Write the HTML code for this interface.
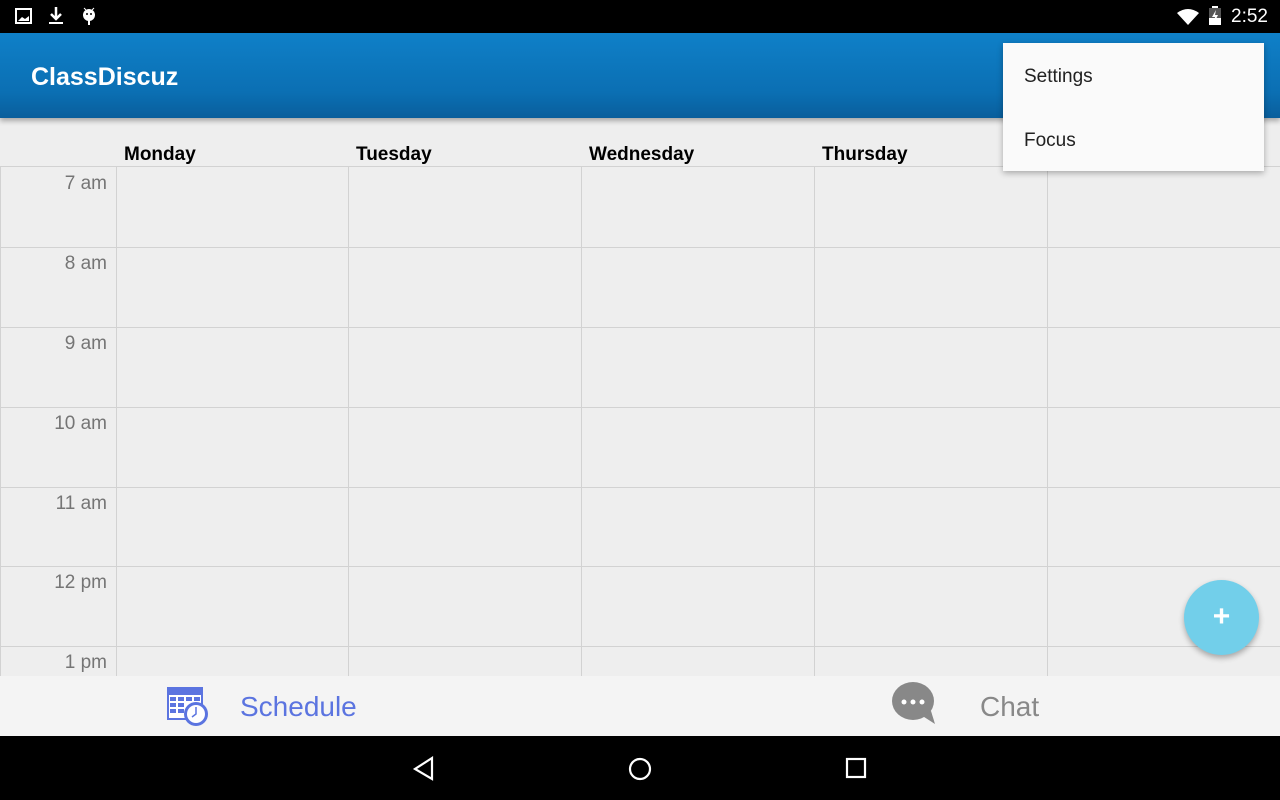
<!DOCTYPE html>
<html><head><style>
*{margin:0;padding:0;box-sizing:border-box}
body{width:1280px;height:800px;overflow:hidden;background:#eee;font-family:"Liberation Sans",sans-serif;position:relative}
.abs{position:absolute}
.sb{left:0;top:0;width:1280px;height:33px;background:#000;color:#fff}
.ab{left:0;top:33px;width:1280px;height:85px;background:linear-gradient(#0f80c8,#0b6fb3 70%,#095e9c);box-shadow:0 3px 5px rgba(0,0,0,.3)}
.day{top:144px;font-weight:bold;font-size:19px;color:#000}
.vl{top:166px;width:1px;height:510px;background:#d2d2d2}
.hl{left:0;width:1280px;height:1px;background:#d2d2d2}
.t{left:0;width:107px;text-align:right;font-size:19px;color:#757575}
</style></head><body>
<div class="abs sb">
<svg class="abs" style="left:15px;top:8px" width="18" height="17"><rect x="1" y="1" width="15" height="14" fill="none" stroke="#fff" stroke-width="2"/><path d="M3 13 L7 9 L10 11 L14 8 V13Z" fill="#fff"/></svg>
<svg class="abs" style="left:47px;top:6px" width="18" height="20"><path d="M9 1V12M4 8L9 13 14 8" stroke="#fff" stroke-width="2.5" fill="none"/><rect x="2" y="16" width="14" height="2" fill="#fff"/></svg>
<svg class="abs" style="left:81px;top:6px" width="16" height="20"><circle cx="8" cy="9" r="6" fill="#fff"/><rect x="7" y="13" width="2" height="6" fill="#fff"/><circle cx="6" cy="8" r="1" fill="#000"/><circle cx="10" cy="8" r="1" fill="#000"/><path d="M3 2L5 4M13 2L11 4" stroke="#fff"/></svg>
<svg class="abs" style="left:1176px;top:8px" width="24" height="18"><path d="M1 5 Q12 -3 23 5 L12 17Z" fill="#fff"/></svg>
<svg class="abs" style="left:1208px;top:6px" width="14" height="20"><rect x="4" y="0" width="6" height="2" fill="#fff"/><rect x="1" y="2" width="12" height="17" fill="#555"/><rect x="1" y="12" width="12" height="7" fill="#fff"/><path d="M8 4L4 11H7L6 17L10 9H7Z" fill="#fff"/></svg>
<div class="abs" style="left:1231px;top:6px;font-size:19px">2:52</div>
</div>
<div class="abs ab"><div class="abs" style="left:31px;top:30px;color:#fff;font-size:25px;font-weight:bold">ClassDiscuz</div></div>
<div class="abs day" style="left:124px">Monday</div>
<div class="abs day" style="left:356px">Tuesday</div>
<div class="abs day" style="left:589px">Wednesday</div>
<div class="abs day" style="left:822px">Thursday</div>
<div class="abs vl" style="left:0"></div>
<div class="abs vl" style="left:116px"></div>
<div class="abs vl" style="left:348px"></div>
<div class="abs vl" style="left:581px"></div>
<div class="abs vl" style="left:814px"></div>
<div class="abs vl" style="left:1047px"></div>
<div class="abs hl" style="top:166px"></div>
<div class="abs hl" style="top:247px"></div>
<div class="abs hl" style="top:327px"></div>
<div class="abs hl" style="top:407px"></div>
<div class="abs hl" style="top:487px"></div>
<div class="abs hl" style="top:566px"></div>
<div class="abs hl" style="top:646px"></div>
<div class="abs t" style="top:173px">7 am</div>
<div class="abs t" style="top:253px">8 am</div>
<div class="abs t" style="top:333px">9 am</div>
<div class="abs t" style="top:413px">10 am</div>
<div class="abs t" style="top:493px">11 am</div>
<div class="abs t" style="top:572px">12 pm</div>
<div class="abs t" style="top:652px">1 pm</div>
<div class="abs" style="left:1003px;top:43px;width:261px;height:128px;background:#fafafa;box-shadow:0 2px 6px rgba(0,0,0,.3);font-size:19px;color:#212121">
<div class="abs" style="left:21px;top:23px">Settings</div>
<div class="abs" style="left:21px;top:87px">Focus</div></div>
<div class="abs" style="left:1184px;top:580px;width:75px;height:75px;border-radius:50%;background:#72cfea;box-shadow:0 3px 6px rgba(0,0,0,.3);color:#fff;font-size:30px;font-weight:bold;text-align:center;line-height:74px">+</div>
<div class="abs" style="left:0;top:676px;width:1280px;height:60px;background:#f4f4f4">
<svg class="abs" style="left:166px;top:10px" width="44" height="42"><rect x="1" y="1" width="36" height="33" fill="#5b74e0"/><rect x="3" y="9" width="32" height="23" fill="#fff"/><g fill="#5b74e0"><rect x="4" y="11" width="6" height="4"/><rect x="12" y="11" width="6" height="4"/><rect x="20" y="11" width="6" height="4"/><rect x="28" y="11" width="6" height="4"/><rect x="4" y="17" width="6" height="4"/><rect x="12" y="17" width="6" height="4"/><rect x="4" y="23" width="6" height="4"/><rect x="12" y="23" width="6" height="4"/></g><circle cx="30" cy="28" r="12" fill="#5b74e0"/><circle cx="30" cy="28" r="9" fill="#fff"/><path d="M30 21V28L26 31" stroke="#5b74e0" stroke-width="1.5" fill="none"/></svg>
<div class="abs" style="left:240px;top:15px;font-size:28px;color:#5b74e0">Schedule</div>
<svg class="abs" style="left:891px;top:5px" width="46" height="44"><ellipse cx="22" cy="20" rx="21" ry="19" fill="#888"/><path d="M30 34L44 43 40 30Z" fill="#888"/><circle cx="13" cy="21" r="2.5" fill="#fff"/><circle cx="22" cy="21" r="2.5" fill="#fff"/><circle cx="31" cy="21" r="2.5" fill="#fff"/></svg>
<div class="abs" style="left:980px;top:15px;font-size:28px;color:#888">Chat</div>
</div>
<div class="abs" style="left:0;top:736px;width:1280px;height:64px;background:#000">
<svg class="abs" style="left:412px;top:20px" width="24" height="26"><path d="M20 2L3 13 20 23Z" fill="none" stroke="#fff" stroke-width="2.2"/></svg>
<svg class="abs" style="left:627px;top:20px" width="26" height="26"><circle cx="13" cy="13" r="10" fill="none" stroke="#fff" stroke-width="2.2"/></svg>
<svg class="abs" style="left:845px;top:21px" width="22" height="22"><rect x="2" y="2" width="18" height="18" fill="none" stroke="#fff" stroke-width="2.2"/></svg>
</div>
</body></html>
